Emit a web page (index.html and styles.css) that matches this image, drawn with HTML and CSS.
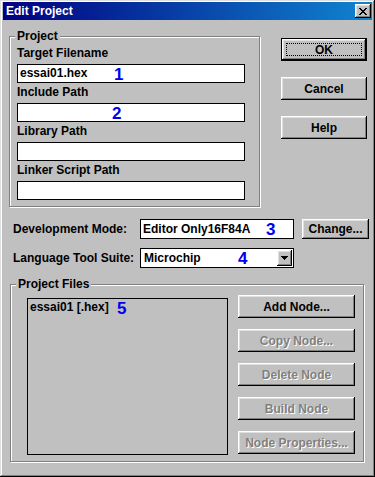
FILE: index.html
```html
<!DOCTYPE html>
<html>
<head>
<meta charset="utf-8">
<link rel="stylesheet" href="styles.css">
</head>
<body>
<div class="window">
  <div class="titlebar">
    <span class="title">Edit Project</span>
    <div class="close">
      <svg width="8" height="7" viewBox="0 0 8 7"><path d="M0 0h2v1h1v1h2v-1h1v-1h2v1h-1v1h-1v1h-1v1h1v1h1v1h1v1h-2v-1h-1v-1h-2v1h-1v1h-2v-1h1v-1h1v-1h1v-1h-1v-1h-1v-1h-1z" fill="#000"/></svg>
    </div>
  </div>
  <div class="content">
    <div class="top">
      <div class="group project">
        <span class="legend">Project</span>
        <div class="fblock">
          <div class="flabel">Target Filename</div>
          <div class="field">essai01.hex<span class="num n1">1</span></div>
        </div>
        <div class="fblock">
          <div class="flabel">Include Path</div>
          <div class="field"><span class="num n2">2</span></div>
        </div>
        <div class="fblock">
          <div class="flabel">Library Path</div>
          <div class="field"></div>
        </div>
        <div class="fblock">
          <div class="flabel">Linker Script Path</div>
          <div class="field"></div>
        </div>
      </div>
      <div class="btn-col">
        <div class="btn default"><span class="focus">OK</span></div>
        <div class="btn">Cancel</div>
        <div class="btn">Help</div>
      </div>
    </div>
    <div class="row dev">
      <span class="lbl">Development Mode:</span>
      <div class="tfield">Editor Only16F84A<span class="num n3">3</span></div>
      <div class="btn change">Change...</div>
    </div>
    <div class="row lang">
      <span class="lbl">Language Tool Suite:</span>
      <div class="combo">
        <span>Microchip</span><span class="num n4">4</span>
        <div class="ddbtn"><svg width="7" height="4" viewBox="0 0 7 4"><path d="M0 0h7v1h-1v1h-1v1h-1v1h-1v-1h-1v-1h-1v-1h-1z" fill="#000"/></svg></div>
      </div>
    </div>
    <div class="group files">
      <span class="legend">Project Files</span>
      <div class="list">essai01 [.hex]<span class="num n5">5</span></div>
      <div class="nodebtns">
        <div class="btn nbtn">Add Node...</div>
        <div class="btn nbtn disabled">Copy Node...</div>
        <div class="btn nbtn disabled">Delete Node</div>
        <div class="btn nbtn disabled">Build Node</div>
        <div class="btn nbtn disabled">Node Properties...</div>
      </div>
    </div>
  </div>
</div>
</body>
</html>
```
FILE: styles.css
```css
* { box-sizing: border-box; }
html, body { margin: 0; padding: 0; }
body {
  width: 375px;
  height: 477px;
  background: #c0c0c0;
  font: bold 12px "Liberation Sans", Arial, sans-serif;
  color: #000;
}
.window {
  width: 375px;
  height: 477px;
  padding: 2px 3px 3px 3px;
  background: #c0c0c0;
  box-shadow: inset -1px -1px #000, inset 1px 1px #dfdfdf, inset -2px -2px #808080, inset 2px 2px #fff;
  display: flex;
  flex-direction: column;
}
.titlebar {
  height: 18px;
  flex: none;
  background: linear-gradient(to right, #000080, #1084d0);
  display: flex;
  align-items: center;
  justify-content: space-between;
  padding: 0 1px 0 3px;
}
.title { color: #fff; font-size: 12px; font-weight: bold; line-height: 14px; }
.close {
  width: 16px;
  height: 14px;
  background: #c0c0c0;
  box-shadow: inset -1px -1px #000, inset 1px 1px #fff, inset -2px -2px #808080, inset 2px 2px #dfdfdf;
  display: flex;
  align-items: center;
  justify-content: center;
  padding-right: 1px;
}
.close svg { display: block; }
.content { padding: 16px 0 0 6px; }
.top { display: flex; align-items: flex-start; }
.group {
  position: relative;
  border: 1px solid #808080;
  box-shadow: inset 1px 1px #fff, 1px 1px #fff;
}
.legend {
  position: absolute;
  top: -8px;
  left: 5px;
  padding: 0 2px;
  background: #c0c0c0;
  line-height: 14px;
}
.project {
  width: 251px;
  height: 171px;
  padding: 9px 0 0 7px;
}
.fblock + .fblock { margin-top: 2px; }
.flabel { line-height: 14px; margin-bottom: 4px; }
.field {
  position: relative;
  width: 228px;
  height: 19px;
  background: #fff;
  border: 1px solid #000;
  padding-left: 2px;
  line-height: 17px;
}
.num {
  position: absolute;
  top: 50%;
  transform: translateY(-50%);
  color: #0000f0;
  font-size: 17px;
  font-weight: bold;
  line-height: 17px;
}
.n1 { left: 96px; }
.n2 { left: 94px; }
.n3 { left: 125px; }
.n4 { left: 97px; }
.n5 { left: 89px; top: 1px; transform: none; }
.btn-col {
  display: flex;
  flex-direction: column;
  gap: 16px;
  margin: 2px 0 0 21px;
}
.btn {
  position: relative;
  width: 86px;
  height: 23px;
  background: #c0c0c0;
  box-shadow: inset -1px -1px #000, inset 1px 1px #fff, inset -2px -2px #808080, inset 2px 2px #dfdfdf;
  display: flex;
  align-items: center;
  justify-content: center;
  line-height: 14px;
}
.btn.default {
  border: 1px solid #000;
}
.focus::after {
  content: "";
  position: absolute;
  left: 4px;
  top: 4px;
  right: 4px;
  bottom: 4px;
  border: 1px dotted #000;
}
.row {
  display: flex;
  align-items: center;
  margin-left: 4px;
}
.lbl { width: 127px; line-height: 14px; }
.dev { margin-top: 12px; }
.lang { margin-top: 9px; }
.tfield {
  position: relative;
  width: 154px;
  height: 20px;
  background: #fff;
  border: 1px solid #000;
  padding-left: 2px;
  line-height: 18px;
}
.btn.change { width: 67px; height: 20px; margin-left: 8px; }
.combo {
  position: relative;
  width: 154px;
  height: 20px;
  background: #fff;
  border: 1px solid #000;
  display: flex;
  align-items: center;
  justify-content: space-between;
  padding: 0 1px 0 3px;
}
.ddbtn {
  width: 15px;
  height: 16px;
  background: #c0c0c0;
  box-shadow: inset -1px -1px #000, inset 1px 1px #fff, inset -2px -2px #808080, inset 2px 2px #dfdfdf;
  display: flex;
  align-items: center;
  justify-content: center;
}
.ddbtn svg { display: block; }
.files {
  width: 354px;
  height: 178px;
  margin: 16px 0 0 1px;
  display: flex;
  align-items: flex-start;
  padding: 10px 0 0 16px;
  gap: 10px;
}
.list {
  position: relative;
  width: 201px;
  height: 157px;
  margin-top: 3px;
  border: 1px solid #000;
  padding: 1px 0 0 2px;
  line-height: 14px;
}
.nodebtns {
  display: flex;
  flex-direction: column;
  gap: 11px;
}
.btn.nbtn { width: 117px; height: 23px; }
.disabled { color: #808080; text-shadow: 1px 1px #fff; }
```
